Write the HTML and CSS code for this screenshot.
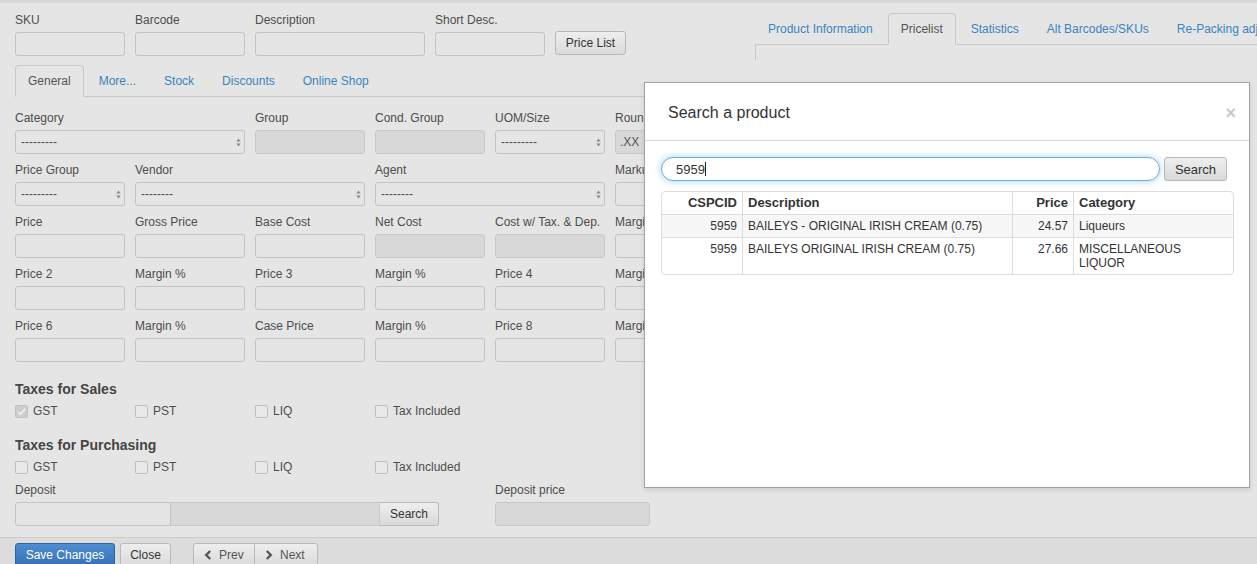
FILE: index.html
```html
<!DOCTYPE html>
<html>
<head>
<meta charset="utf-8">
<link rel="stylesheet" href="styles.css">
</head>
<body>
<div class="strip"></div>
<div class="main">
  <div class="left">
    <div class="toprow">
      <div class="field w110"><label>SKU</label><input class="input" type="text"></div>
      <div class="field w110"><label>Barcode</label><input class="input" type="text"></div>
      <div class="field w170"><label>Description</label><input class="input" type="text"></div>
      <div class="field w110"><label>Short Desc.</label><input class="input" type="text"></div>
      <button class="btn top-btn">Price List</button>
    </div>

    <div class="tabs">
      <span class="tab active">General</span>
      <span class="tab">More...</span>
      <span class="tab">Stock</span>
      <span class="tab">Discounts</span>
      <span class="tab">Online Shop</span>
    </div>

    <div class="tabcontent">
      <div class="grid">
        <div class="field span2"><label>Category</label>
          <span class="sel"><select class="input select"><option>---------</option></select><svg class="arr" width="5" height="9" viewBox="0 0 5 9"><path d="M0.3 3.6 L2.5 0.4 L4.7 3.6 Z M0.3 5.4 L2.5 8.6 L4.7 5.4 Z"/></svg></span></div>
        <div class="field"><label>Group</label><input class="input" type="text" disabled></div>
        <div class="field"><label>Cond. Group</label><input class="input" type="text" disabled></div>
        <div class="field"><label>UOM/Size</label>
          <span class="sel"><select class="input select"><option>---------</option></select><svg class="arr" width="5" height="9" viewBox="0 0 5 9"><path d="M0.3 3.6 L2.5 0.4 L4.7 3.6 Z M0.3 5.4 L2.5 8.6 L4.7 5.4 Z"/></svg></span></div>
        <div class="field"><label>Rounding</label><input class="input round" type="text" value=".XX" disabled></div>

        <div class="field"><label>Price Group</label>
          <span class="sel"><select class="input select"><option>---------</option></select><svg class="arr" width="5" height="9" viewBox="0 0 5 9"><path d="M0.3 3.6 L2.5 0.4 L4.7 3.6 Z M0.3 5.4 L2.5 8.6 L4.7 5.4 Z"/></svg></span></div>
        <div class="field span2"><label>Vendor</label>
          <span class="sel"><select class="input select"><option>--------</option></select><svg class="arr" width="5" height="9" viewBox="0 0 5 9"><path d="M0.3 3.6 L2.5 0.4 L4.7 3.6 Z M0.3 5.4 L2.5 8.6 L4.7 5.4 Z"/></svg></span></div>
        <div class="field span2"><label>Agent</label>
          <span class="sel"><select class="input select"><option>--------</option></select><svg class="arr" width="5" height="9" viewBox="0 0 5 9"><path d="M0.3 3.6 L2.5 0.4 L4.7 3.6 Z M0.3 5.4 L2.5 8.6 L4.7 5.4 Z"/></svg></span></div>
        <div class="field"><label>Markup</label><input class="input" type="text"></div>

        <div class="field"><label>Price</label><input class="input" type="text"></div>
        <div class="field"><label>Gross Price</label><input class="input" type="text"></div>
        <div class="field"><label>Base Cost</label><input class="input" type="text"></div>
        <div class="field"><label>Net Cost</label><input class="input" type="text" disabled></div>
        <div class="field"><label>Cost w/ Tax. &amp; Dep.</label><input class="input" type="text" disabled></div>
        <div class="field"><label>Margin %</label><input class="input" type="text"></div>

        <div class="field"><label>Price 2</label><input class="input" type="text"></div>
        <div class="field"><label>Margin %</label><input class="input" type="text"></div>
        <div class="field"><label>Price 3</label><input class="input" type="text"></div>
        <div class="field"><label>Margin %</label><input class="input" type="text"></div>
        <div class="field"><label>Price 4</label><input class="input" type="text"></div>
        <div class="field"><label>Margin %</label><input class="input" type="text"></div>

        <div class="field"><label>Price 6</label><input class="input" type="text"></div>
        <div class="field"><label>Margin %</label><input class="input" type="text"></div>
        <div class="field"><label>Case Price</label><input class="input" type="text"></div>
        <div class="field"><label>Margin %</label><input class="input" type="text"></div>
        <div class="field"><label>Price 8</label><input class="input" type="text"></div>
        <div class="field"><label>Margin %</label><input class="input" type="text"></div>
      </div>

      <h4 class="heading h-sales">Taxes for Sales</h4>
      <div class="checks">
        <span class="check"><span class="box checked"><svg width="11" height="11" viewBox="0 0 11 11"><path d="M2 5.8 L4.4 8.2 L9 2.8" fill="none" stroke="#eeeeee" stroke-width="1.8"/></svg></span>GST</span>
        <span class="check"><span class="box"></span>PST</span>
        <span class="check"><span class="box"></span>LIQ</span>
        <span class="check"><span class="box"></span>Tax Included</span>
      </div>

      <h4 class="heading h-purch">Taxes for Purchasing</h4>
      <div class="checks">
        <span class="check"><span class="box"></span>GST</span>
        <span class="check"><span class="box"></span>PST</span>
        <span class="check"><span class="box"></span>LIQ</span>
        <span class="check"><span class="box"></span>Tax Included</span>
      </div>

      <div class="grid deposit">
        <div class="field span4"><label>Deposit</label>
          <div class="igroup">
            <input class="input ig-a" type="text">
            <input class="input ig-b" type="text" disabled>
            <button class="btn ig-btn">Search</button>
          </div>
        </div>
        <div class="field span2"><label>Deposit price</label><input class="input dep-price" type="text" disabled></div>
      </div>
    </div>
  </div>

  <div class="right">
    <div class="tabs rtabs">
      <span class="tab">Product Information</span>
      <span class="tab active">Pricelist</span>
      <span class="tab">Statistics</span>
      <span class="tab">Alt Barcodes/SKUs</span>
      <span class="tab">Re-Packing adjustments</span>
    </div>
    <div class="rpanel"></div>
  </div>
</div>

<div class="footer">
  <button class="btn btn-primary">Save Changes</button>
  <button class="btn btn-close">Close</button>
  <div class="bgroup">
    <button class="btn nav-btn"><svg width="8" height="10" viewBox="0 0 8 10"><polyline points="6.2,1 2.2,5 6.2,9" fill="none" stroke="#555" stroke-width="2.4"/></svg>Prev</button>
    <button class="btn nav-btn"><svg width="8" height="10" viewBox="0 0 8 10"><polyline points="1.8,1 5.8,5 1.8,9" fill="none" stroke="#555" stroke-width="2.4"/></svg>Next</button>
  </div>
</div>

<div class="modal">
  <div class="mhead">
    <h3 class="mtitle">Search a product</h3>
    <span class="mclose">×</span>
  </div>
  <div class="mbody">
    <div class="sform">
      <span class="swrap"><input class="sinput" type="text" value="5959"><span class="caret"></span></span>
      <button class="btn sbtn">Search</button>
    </div>
    <table class="rtable">
      <colgroup><col class="c1"><col class="c2"><col class="c3"><col class="c4"></colgroup>
      <thead>
        <tr><th class="num">CSPCID</th><th>Description</th><th class="num">Price</th><th>Category</th></tr>
      </thead>
      <tbody>
        <tr class="odd"><td class="num">5959</td><td>BAILEYS - ORIGINAL IRISH CREAM (0.75)</td><td class="num">24.57</td><td>Liqueurs</td></tr>
        <tr><td class="num">5959</td><td>BAILEYS ORIGINAL IRISH CREAM (0.75)</td><td class="num">27.66</td><td class="cat">MISCELLANEOUS LIQUOR</td></tr>
      </tbody>
    </table>
  </div>
</div>
</body>
</html>
```

FILE: styles.css
```css
* { box-sizing: border-box; }
html, body { margin: 0; height: 100%; }
body {
  background: #e5e5e5;
  font-family: "Liberation Sans", Arial, sans-serif;
  font-size: 12px;
  color: #4d4d4d;
  overflow: hidden;
  position: relative;
}
.strip { height: 3px; background: #d9d9d9; }
.main { display: flex; }
.left { width: 725px; flex: none; padding: 8px 0 0 15px; }
.right { flex: 1; min-width: 0; margin-left: 30px; padding-top: 10px; overflow: hidden; }

.field label { display: block; line-height: 18px; margin-bottom: 3px; white-space: nowrap; }
.w110 { width: 110px; }
.w170 { width: 170px; }
.toprow { display: flex; gap: 10px; align-items: flex-end; }

.input {
  display: block;
  width: 100%;
  height: 24px;
  border: 1px solid #c3c3c3;
  border-radius: 3px;
  background: #e5e5e5;
  font: inherit;
  color: #4d4d4d;
  padding: 0 6px;
  margin: 0;
  outline: none;
}
.input:disabled { background: #d8d8d8; border-color: #c8c8c8; }
.round { padding-left: 4px; color: #555; }

.btn {
  height: 24px;
  border: 1px solid #b9b9b9;
  border-radius: 3px;
  background: linear-gradient(#eeeeee, #dadada);
  color: #333;
  font: inherit;
  padding: 0 9px;
  margin: 0;
  white-space: nowrap;
}
.top-btn { margin-bottom: 1px; width: 71px; padding: 0; }

.tabs { display: flex; gap: 2px; border-bottom: 1px solid #c8c8c8; white-space: nowrap; }
.left .tabs { margin-top: 9px; }
.tab {
  padding: 7px 12px 6px;
  line-height: 17px;
  color: #3a84bf;
  border: 1px solid transparent;
  border-radius: 4px 4px 0 0;
  margin-bottom: -1px;
  flex: none;
}
.tab.active { color: #555; border-color: #c8c8c8; border-bottom-color: #e5e5e5; background: #e5e5e5; }
.rpanel { height: 15px; border-left: 1px solid #c8c8c8; }

.tabcontent { padding-top: 12px; }
.grid { display: grid; grid-template-columns: repeat(6, 110px); column-gap: 10px; row-gap: 7px; }
.span2 { grid-column: span 2; }
.span4 { grid-column: span 4; }

.sel { position: relative; display: block; }
.select { -webkit-appearance: none; appearance: none; padding: 0 5px; }
.arr { position: absolute; right: 4px; top: 8px; fill: #8c8c8c; pointer-events: none; }

.heading { font-size: 14px; font-weight: bold; color: #454545; line-height: 17px; margin: 0; }
.h-sales { margin-top: 19px; }
.h-purch { margin-top: 17px; }
.checks { display: grid; grid-template-columns: repeat(4, 120px); margin-top: 5px; height: 17px; }
.check { display: flex; align-items: center; gap: 5px; line-height: 17px; }
.box {
  width: 13px; height: 13px;
  border: 1px solid #bfbfbf;
  border-radius: 2px;
  background: #e9e9e9;
  display: flex; align-items: center; justify-content: center;
  flex: none;
}
.box.checked { background: #cdcdcd; border-color: #c2c2c2; }

.deposit { margin-top: 5px; }
.igroup { display: flex; width: 424px; }
.ig-a { width: 156px; flex: none; border-radius: 3px 0 0 3px; }
.ig-b { width: 209px; flex: none; border-radius: 0; border-left: 0; }
.ig-btn { width: 59px; flex: none; border-radius: 0 3px 3px 0; border-left: 0; padding: 0; }
.dep-price { width: 155px; }

.footer {
  margin-top: 11px;
  border-top: 1px solid #cccccc;
  background: #dcdcdc;
  padding: 5px 15px;
  display: flex;
  height: 40px;
}
.btn-primary {
  background: linear-gradient(#4e8dd2, #3670b7);
  border-color: #2f649f;
  color: #fff;
  padding: 0;
  width: 100px;
}
.btn-close { margin-left: 5px; width: 51px; padding: 0; }
.bgroup { display: flex; margin-left: 22px; }
.nav-btn { display: flex; align-items: center; gap: 7px; padding: 0 10px; color: #555; }
.nav-btn:first-child { border-radius: 3px 0 0 3px; width: 62px; }
.nav-btn:last-child { border-radius: 0 3px 3px 0; margin-left: -1px; width: 64px; }

.modal {
  position: absolute;
  left: 644px;
  top: 82px;
  width: 606px;
  height: 406px;
  background: #fff;
  border: 1px solid #a3a3a3;
  box-shadow: 0 2px 5px rgba(0,0,0,0.12);
}
.mhead {
  height: 58px;
  border-bottom: 1px solid #d4d4d4;
  display: flex;
  align-items: center;
  justify-content: space-between;
  padding: 2px 13px 0 23px;
}
.mtitle { margin: 0; font-size: 16px; font-weight: normal; color: #333; line-height: 22px; }
.mclose { font-size: 18px; font-weight: bold; color: #c8c8c8; line-height: 18px; }
.mbody { padding: 16px 15px 0 16px; }
.sform { display: flex; gap: 4px; }
.swrap { position: relative; display: block; width: 499px; }
.sinput {
  display: block;
  width: 100%;
  height: 24px;
  border: 1px solid #66afe9;
  border-radius: 12px;
  box-shadow: 0 0 7px rgba(102,175,233,0.6);
  padding: 0 14px;
  font: inherit;
  font-size: 13px;
  color: #333;
  outline: none;
  margin: 0;
}
.caret { position: absolute; left: 44px; top: 5px; width: 1px; height: 14px; background: #222; }
.sbtn { width: 63px; font-size: 13px; padding: 0; }

.rtable {
  margin-top: 10px;
  width: 573px;
  table-layout: fixed;
  border-collapse: separate;
  border-spacing: 0;
  border: 1px solid #dddddd;
  border-radius: 4px;
  color: #333;
}
.c1 { width: 80px; }
.c2 { width: 270px; }
.c3 { width: 61px; }
.c4 { width: 160px; }
.rtable th, .rtable td {
  padding: 4px 5px;
  line-height: 14px;
  text-align: left;
  vertical-align: top;
  border-left: 1px solid #dddddd;
}
.rtable th:first-child, .rtable td:first-child { border-left: 0; }
.rtable th { font-size: 13px; font-weight: bold; }
.rtable td { border-top: 1px solid #dddddd; font-size: 12px; }
.rtable .num { text-align: right; }
.rtable .odd td { background: #f7f7f7; }
.rtable .cat { padding-right: 10px; }
```
